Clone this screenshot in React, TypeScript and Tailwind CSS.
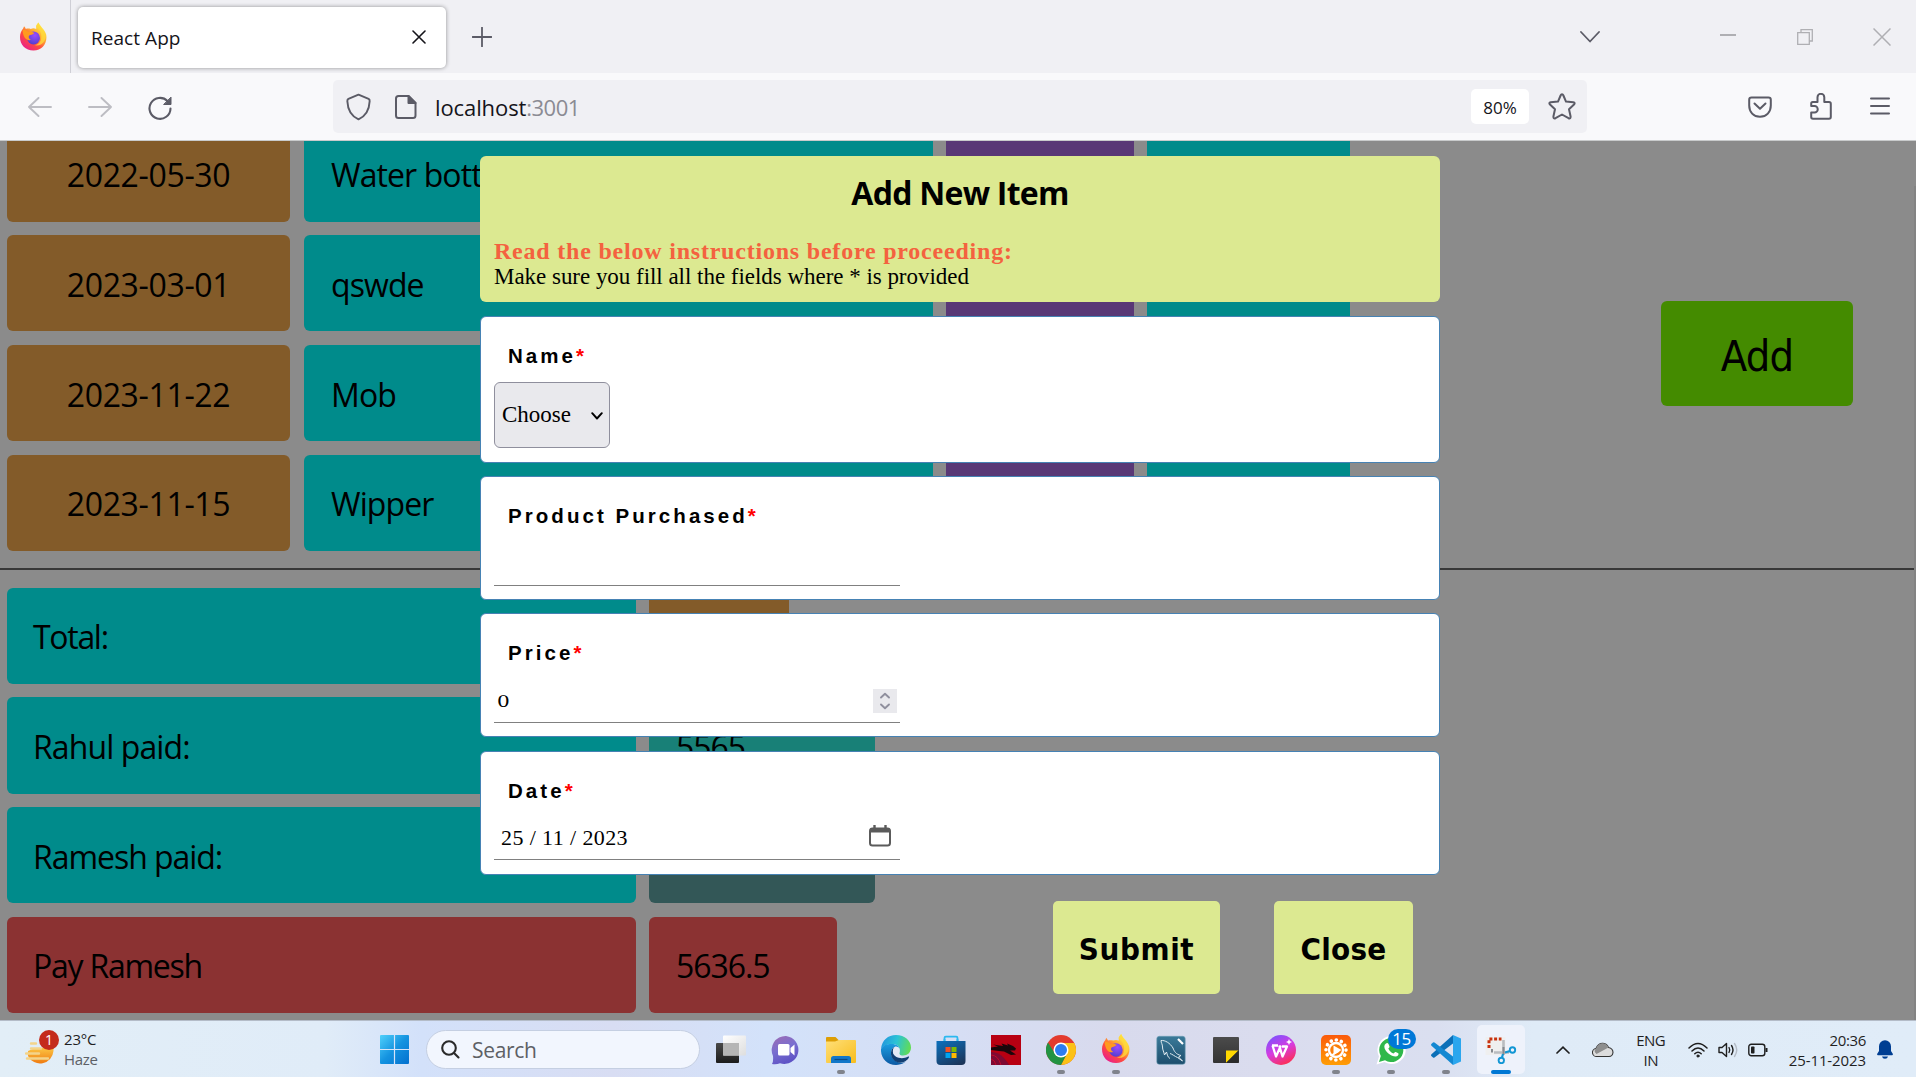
import React from "react";

const ui = "font-['Open_Sans','Noto_Sans',sans-serif]";
const serif = "font-['Liberation_Serif',serif]";

function Firefox({ className }: { className: string }) {
  return (
    <svg viewBox="0 0 30 32" className={className}>
      <defs>
        <linearGradient id="ffBody" x1="0.85" y1="0.1" x2="0.2" y2="0.95">
          <stop offset="0" stopColor="#fff44f" />
          <stop offset="0.35" stopColor="#ffa931" />
          <stop offset="0.65" stopColor="#ff4b3e" />
          <stop offset="1" stopColor="#e91e8c" />
        </linearGradient>
        <radialGradient id="ffGlobe" cx="0.6" cy="0.3" r="0.8">
          <stop offset="0" stopColor="#9a4dff" />
          <stop offset="1" stopColor="#4a3dc8" />
        </radialGradient>
      </defs>
      <path d="M18 5C18 3 20 1 20.500 0C22 4 27 7 29 13C31 22 25 31 15 31C6 31 0 25 0 16C0 12 1.500 9 3.500 6.500L4.500 4C5.500 5 6 6 6.500 7C8 6.500 10 6.500 12 7C14 6 16 6 18 7Z" fill="url(#ffBody)" />
      <circle cx="15" cy="17" r="7.200" fill="url(#ffGlobe)" />
      <path d="M3 8C6 8 8 9 9 10.500C11 10 14 10.500 16 11.500C14 13 12 14 10.500 14C9 15 9.500 18 12 19C9 21 3 18 3 8Z" fill="#ff9a1f" />
      <path d="M18 5C23 8 25 14 23 20C22 23 19 25 16 25C23 27 29 21 28.500 14C27 9 23 6 20.500 0C19 2 17 4 18 5Z" fill="#ffd93b" opacity="0.8" />
    </svg>
  );
}

function TitleBar() {
  return (
    <div className="flex h-[73px] shrink-0 items-center bg-[#f0f0f4]">
      <div className="flex h-full w-[71px] items-center border-r border-[#cfcfd6] pl-5">
        <Firefox className="h-[32px] w-[27px]" />
      </div>
      <div className="mt-[1px] ml-[7px] flex h-[61px] w-[368px] items-center justify-between rounded-[5px] bg-white pr-[20px] pl-[13px] shadow-[0_0_4px_rgba(0,0,0,0.4)]">
        <span className={`${ui} pt-[2px] text-[19px] tracking-[0.050px] text-[#15141a]`}>React App</span>
        <svg viewBox="0 0 14 14" className="h-[14px] w-[14px]" stroke="#15141a" strokeWidth="1.600" strokeLinecap="round">
          <path d="M1 1L13 13M13 1L1 13" />
        </svg>
      </div>
      <svg viewBox="0 0 20 20" className="mt-[1px] ml-[26px] h-5 w-5" stroke="#5b5b66" strokeWidth="1.800" strokeLinecap="round">
        <path d="M10 0.500V19.500M0.500 10H19.500" />
      </svg>
      <div className="ml-auto flex items-center">
        <svg viewBox="0 0 20 12" className="mr-[120px] h-3 w-5" fill="none" stroke="#5b5b66" strokeWidth="1.800" strokeLinecap="round" strokeLinejoin="round">
          <path d="M1 1L10 10.500L19 1" />
        </svg>
        <div className="mr-[61px] mb-[3px] h-[2px] w-4 bg-[#afafb3]" />
        <svg viewBox="0 0 16 16" className="mr-[60px] h-4 w-4" fill="none" stroke="#afafb3" strokeWidth="1.300">
          <path d="M0.700 3.700H12.300V15.300H0.700ZM4 3.500V0.700H15.300V12H12.500" />
        </svg>
        <svg viewBox="0 0 18 18" className="mr-[25px] h-[18px] w-[18px]" stroke="#afafb3" strokeWidth="1.500">
          <path d="M0.500 0.500L17.500 17.500M17.500 0.500L0.500 17.500" />
        </svg>
      </div>
    </div>
  );
}

function Toolbar() {
  return (
    <div className="flex h-[68px] shrink-0 items-center border-b border-[#c9cbcc] bg-[#f9f9fb]">
      <svg viewBox="0 0 24 20" className="mt-[1px] ml-7 h-5 w-6" fill="none" stroke="#bdbdc3" strokeWidth="1.900" strokeLinecap="round" strokeLinejoin="round">
        <path d="M23 10H1M10.500 1L1 10L10.500 19" />
      </svg>
      <svg viewBox="0 0 24 20" className="mt-[1px] ml-[36px] h-5 w-6" fill="none" stroke="#bdbdc3" strokeWidth="1.900" strokeLinecap="round" strokeLinejoin="round">
        <path d="M1 10H23M13.500 1L23 10L13.500 19" />
      </svg>
      <svg viewBox="0 0 24 24" className="mt-[2px] ml-[36px] h-6 w-6 shrink-0" fill="none" stroke="#5b5b66" strokeWidth="2.100" strokeLinecap="round">
        <path d="M22.500 12.500A10.500 10.500 0 1 1 19.500 5" />
        <path d="M23 1.500V8.500H16Z" fill="#5b5b66" strokeWidth="1" strokeLinejoin="round" />
      </svg>
      <div className="ml-[161px] flex h-[53px] w-[1254px] shrink-0 items-center rounded-[5px] bg-[#f0f0f4]">
        <svg viewBox="0 0 26 28" className="ml-[13px] h-7 w-[25px]" fill="none" stroke="#5b5b66" strokeWidth="2" strokeLinejoin="round">
          <path d="M13 1.200L23.500 5.500Q24.800 6.200 24.600 8C24.200 16.500 20.500 23.500 13 26.800C5.500 23.500 1.800 16.500 1.400 8Q1.300 6.200 2.500 5.500Z" />
        </svg>
        <svg viewBox="0 0 22 24" className="ml-[24px] h-6 w-[22px]" fill="none" stroke="#5b5b66" strokeWidth="2" strokeLinejoin="round">
          <path d="M3.500 1H13.500L20.500 8V20.500Q20.500 23 18 23H3.500Q1 23 1 20.500V3.500Q1 1 3.500 1Z" />
          <path d="M13.500 1V8H20.500Z" fill="#5b5b66" />
        </svg>
        <div className={`${ui} mt-[2px] ml-[18px] flex text-[22px] text-[#15141a]`}>
          <span className="tracking-[-0.100px]">localhost</span>
          <span className="tracking-[-0.500px] text-[#8b8b93]">:3001</span>
        </div>
        <div className={`${ui} ml-auto flex h-[35px] w-[58px] items-center justify-center rounded-[5px] bg-white pt-[2px] text-[17px] text-[#15141a]`}>80%</div>
        <svg viewBox="0 0 28 27" className="mr-[11px] ml-[19px] h-[27px] w-7" fill="none" stroke="#5b5b66" strokeWidth="2" strokeLinejoin="round">
          <path d="M14 1.300Q14.900 1.300 15.400 2.500L18 8.600L25.300 9.300Q27.600 9.700 26 11.500L21 16.200L22.600 23.500Q22.700 26 20.500 25.200L14 21.500L7.500 25.200Q5.300 26 5.400 23.500L7 16.200L2 11.500Q0.400 9.700 2.700 9.300L10 8.600L12.600 2.500Q13.100 1.300 14 1.300Z" />
        </svg>
      </div>
      <div className="mr-[26px] ml-auto flex items-center">
        <svg viewBox="0 0 24 22" className="mr-[1px] h-[22px] w-6" fill="none" stroke="#5b5b66" strokeWidth="2" strokeLinecap="round" strokeLinejoin="round">
          <path d="M3.500 1.500H20.500Q22.800 1.500 22.800 3.800V9.500C22.800 16 18.500 20.800 12 20.800C5.500 20.800 1.200 16 1.200 9.500V3.800Q1.200 1.500 3.500 1.500Z" />
          <path d="M6.500 7.500L12 12.800L17.500 7.500" />
        </svg>
        <svg viewBox="0 0 22 27" className="ml-[37px] h-[27px] w-[22px]" fill="none" stroke="#5b5b66" strokeWidth="2" strokeLinejoin="round">
          <path d="M1.200 13V10.500Q1.200 9 2.700 9H7.500V4.200A3.400 3.400 0 0 1 14.300 4.200V9H19Q20.800 9 20.800 10.800V24Q20.800 25.800 19 25.800H3Q1.200 25.800 1.200 24V19.500H4.500A3.200 3.200 0 0 0 4.500 13Z" />
        </svg>
        <svg viewBox="0 0 20 18" className="-mt-[2px] ml-[38px] h-[18px] w-5" stroke="#5b5b66" strokeWidth="2" strokeLinecap="round">
          <path d="M1 1.500H19M1 9H19M1 16.500H19" />
        </svg>
      </div>
    </div>
  );
}

const items = [
  { date: "2022-05-30", name: "Water bottle" },
  { date: "2023-03-01", name: "qswde" },
  { date: "2023-11-22", name: "Mob" },
  { date: "2023-11-15", name: "Wipper" },
];

const cell = "flex h-[96.200px] items-center rounded-[6px] pt-[3px] whitespace-nowrap";

function Ledger() {
  return (
    <div className={`${ui} flex h-full text-[32px] text-black`}>
      <div className="w-[1350px] shrink-0">
        <div className="-mt-[15.500px] flex flex-col gap-[13.600px] pl-[7px]">
          {items.map((it) => (
            <div key={it.date} className="flex">
              <div className={`${cell} w-[283px] justify-center bg-[#835b29] tracking-[-0.350px]`}>{it.date}</div>
              <div className={`${cell} ml-[14px] w-[629px] bg-[#008b8b] pl-[27px] tracking-[-0.900px]`}>{it.name}</div>
              <div className={`${cell} ml-[13px] w-[188px] bg-[#593876]`} />
              <div className={`${cell} ml-[13px] w-[203px] bg-[#008b8b]`} />
            </div>
          ))}
        </div>
        <div className="mt-[16.900px] h-[2px] w-[1914px] bg-[#383838]" />
        <div className="mt-[17.800px] flex flex-col gap-[13.500px] pl-[7px] tracking-[-1.050px]">
          <div className="flex gap-[13px]">
            <div className={`${cell} w-[629px] bg-[#008b8b] pl-[26px] tracking-[-1.300px]`}>Total:</div>
            <div className={`${cell} w-[140px] bg-[#835b29]`} />
          </div>
          <div className="flex gap-[13px]">
            <div className={`${cell} w-[629px] bg-[#008b8b] pl-[26px] tracking-[-0.900px]`}>Rahul paid:</div>
            <div className={`${cell} w-[226px] bg-[#188077] pl-[27px]`}>5565</div>
          </div>
          <div className="flex gap-[13px]">
            <div className={`${cell} w-[629px] bg-[#008b8b] pl-[26px]`}>Ramesh paid:</div>
            <div className={`${cell} w-[226px] bg-[#335757]`} />
          </div>
          <div className="flex gap-[13px]">
            <div className={`${cell} w-[629px] bg-[#8b3232] pl-[26px] tracking-[-1.250px]`}>Pay Ramesh</div>
            <div className={`${cell} w-[188px] bg-[#8b3232] pl-[27px]`}>5636.5</div>
          </div>
        </div>
      </div>
      <div className="mt-[160px] ml-[311px] flex h-[105px] w-[192px] items-center justify-center rounded-[6px] bg-[#448b00] pt-[5px] font-['DejaVu_Sans_Condensed','DejaVu_Sans',sans-serif] text-[43px] tracking-[-0.800px]">
        Add
      </div>
      <div className="mt-[45px] ml-auto w-[2px] bg-[#838383]" />
    </div>
  );
}

function Label({ text }: { text: string }) {
  return (
    <div className="pl-[14px] font-['Liberation_Sans',sans-serif] text-[20.500px] leading-[24px] font-bold tracking-[3.050px] text-black">
      {text}
      <span className="text-[#ff0000]">*</span>
    </div>
  );
}

const card = "w-full rounded-[6px] border border-[#4682b4] bg-white px-[13px]";
const field = `${serif} flex h-[47px] w-[406px] items-center justify-between border-b border-[#808080] text-black`;

function Modal() {
  return (
    <div className="absolute inset-0 pl-[480px]">
      <div className="mt-[15px] flex w-[960px] flex-col">
        <div className="h-[146px] rounded-[6px] bg-[#dce991] px-[14px]">
          <div className={`${ui} pt-[14px] text-center text-[32px] leading-[46px] font-bold tracking-[-0.750px] text-black`}>Add New Item</div>
          <div className={`${serif} mt-[23px] text-[24px] leading-[25px] font-bold tracking-[0.790px] text-[#f4623f]`}>Read the below instructions before proceeding:</div>
          <div className={`${serif} text-[23px] leading-[25px] tracking-[-0.030px] text-black`}>Make sure you fill all the fields where * is provided</div>
        </div>
        <div className={`${card} mt-[14px] h-[147px] pt-[27px]`}>
          <Label text="Name" />
          <div className={`${serif} mt-[14px] flex h-[66px] w-[116px] items-center justify-between rounded-[6px] border border-[#8f8f9d] bg-[#e9e9ed] pt-[1px] pr-[6px] pl-[7px] text-[23px] text-black`}>
            Choose
            <svg viewBox="0 0 12 8" className="h-2 w-3" fill="none" stroke="#000" strokeWidth="1.900" strokeLinecap="round" strokeLinejoin="round">
              <path d="M1.200 1.200L6 6.500L10.800 1.200" />
            </svg>
          </div>
        </div>
        <div className={`${card} mt-[13px] h-[124px] pt-[27px]`}>
          <Label text="Product Purchased" />
          <div className={`${field} mt-[11px]`} />
        </div>
        <div className={`${card} mt-[13px] h-[124px] pt-[27px]`}>
          <Label text="Price" />
          <div className={`${field} mt-[11px] pt-[3px] pr-[3px] pl-[3px]`}>
            <span className="origin-left scale-x-125 pt-[2px] font-['DejaVu_Serif',serif] text-[16px] leading-6">0</span>
            <svg viewBox="0 0 24 24" className="h-6 w-6 bg-[#e9e9ed]" fill="none" stroke="#8f8f9d" strokeWidth="1.900" strokeLinecap="round" strokeLinejoin="round">
              <path d="M8 8.500L12 4.800L16 8.500M8 15.500L12 19.200L16 15.500" />
            </svg>
          </div>
        </div>
        <div className={`${card} mt-[14px] h-[124px] pt-[27px]`}>
          <Label text="Date" />
          <div className={`${field} mt-[10px] pr-[9px] pl-[7px]`}>
            <span className="pt-[3px] text-[22px] tracking-[0.400px]">25 / 11 / 2023</span>
            <svg viewBox="0 0 22 22" className="mb-[1px] h-[22px] w-[22px]" fill="none" stroke="#5b5b5b" strokeWidth="2">
              <rect x="1" y="3.500" width="20" height="17" rx="2.500" />
              <path d="M1 5.500H21" strokeWidth="4" />
              <path d="M5.500 0.500V4M16.500 0.500V4" strokeWidth="2.400" strokeLinecap="round" />
            </svg>
          </div>
        </div>
        <div className="mt-[26px] mr-[27px] flex justify-end gap-[54px] font-['DejaVu_Sans_Condensed','DejaVu_Sans',sans-serif] text-[31px] font-bold text-black">
          <div className="flex h-[93px] w-[167px] items-center justify-center rounded-[5px] bg-[#dce991] pt-[3px] tracking-[0.600px]">Submit</div>
          <div className="flex h-[93px] w-[139px] items-center justify-center rounded-[5px] bg-[#dce991] pt-[3px] tracking-[0.300px]">Close</div>
        </div>
      </div>
    </div>
  );
}

function TaskView() {
  return (
    <svg viewBox="0 0 30 30" className="h-[30px] w-[30px]">
      <defs>
        <linearGradient id="tvDark" x1="0" y1="0" x2="0" y2="1"><stop offset="0" stopColor="#494949" /><stop offset="1" stopColor="#1c1c1c" /></linearGradient>
        <linearGradient id="tvLight" x1="0" y1="0" x2="1" y2="1"><stop offset="0" stopColor="#ffffff" /><stop offset="1" stopColor="#dedede" /></linearGradient>
      </defs>
      <rect x="0" y="8" width="23" height="20" rx="1" fill="url(#tvDark)" />
      <rect x="7" y="0.500" width="23" height="20" rx="1" fill="url(#tvLight)" />
      <rect x="7" y="8" width="16" height="12.500" fill="#b5b5b5" />
    </svg>
  );
}
function Chat() {
  return (
    <svg viewBox="0 0 30 30" className="h-[30px] w-[30px]">
      <defs><linearGradient id="chatBg" x1="0.2" y1="0" x2="0.6" y2="1"><stop offset="0" stopColor="#9a6bb5" /><stop offset="0.45" stopColor="#7a6fd0" /><stop offset="1" stopColor="#5b50c4" /></linearGradient></defs>
      <path d="M15 1A14 14 0 1 1 9 28.200Q5 30 1 29Q2.500 27 2 21A14 14 0 0 1 15 1Z" fill="url(#chatBg)" />
      <rect x="7" y="9" width="11.500" height="11.500" rx="1.500" fill="#fff" />
      <path d="M19.500 13L23.500 9.500V20.500L19.500 17Z" fill="#fff" />
    </svg>
  );
}
function Folder() {
  return (
    <svg viewBox="0 0 30 30" className="h-[30px] w-[30px]">
      <defs><linearGradient id="fold" x1="0" y1="0" x2="1" y2="1"><stop offset="0" stopColor="#ffdf79" /><stop offset="1" stopColor="#f8bd1c" /></linearGradient></defs>
      <path d="M0 3Q0 2 1 2H9.500L13 5.500V12H0Z" fill="#dd9e05" />
      <path d="M0 6.500H9L13 5H29Q30 5 30 6V27Q30 28 29 28H1Q0 28 0 27Z" fill="url(#fold)" />
      <path d="M5 28V23.500Q5 21 7.500 21H22.500Q25 21 25 23.500V28Z" fill="#1277c9" />
      <path d="M8.500 24.500H21.500" stroke="#0a4a86" strokeWidth="1.200" />
    </svg>
  );
}
function Edge() {
  return (
    <svg viewBox="0 0 30 30" className="h-[30px] w-[30px]">
      <defs>
        <linearGradient id="edgeTop" x1="0" y1="0.3" x2="1" y2="0.5"><stop offset="0" stopColor="#2295dd" /><stop offset="0.5" stopColor="#2bc3d6" /><stop offset="1" stopColor="#62dc55" /></linearGradient>
        <linearGradient id="edgeLeft" x1="0" y1="0" x2="0" y2="1"><stop offset="0" stopColor="#1b9de0" /><stop offset="1" stopColor="#0c59a4" /></linearGradient>
      </defs>
      <path d="M0 14C1 5 7 0 15 0C24 0 30 6 30 12.500C30 17.500 26.500 20.500 22 20.500C19 20.500 17.500 19 18.500 17C19.800 13 17 9 11.500 9C5 9 1 12 0 14Z" fill="url(#edgeTop)" />
      <path d="M0 14C2 10 6 8.800 11 8.900C15 9 18 11 18.500 13C15 10.500 10.500 12 10 17.500C9.700 22 13 26 18 27.500Q21.500 28.400 24.500 26.800C21 29.500 17.500 30 15 30C6 30 -0.500 23 0 14Z" fill="url(#edgeLeft)" />
      <path d="M10 17.500C9.500 23 14 27.600 19 27.700C23 27.700 26.500 25.500 28 22.300C28.300 21.500 27.800 21.200 27.200 21.500C22 24.500 14 23.500 12.200 18C11.600 15.500 12.500 13 14 12C11.500 12.500 10.200 15 10 17.500Z" fill="#123f73" />
      <path d="M14.500 11.500C11.500 13 11 17.500 13.500 20.300C16 22.500 20 23 23 22.500C20 21.500 17.500 20 18.600 17C19.300 14.500 17.500 11.500 14.500 11.500Z" fill="#e3e9f6" />
    </svg>
  );
}
function Store() {
  return (
    <svg viewBox="0 0 30 30" className="h-[30px] w-[30px]">
      <defs><linearGradient id="storeBg" x1="0.2" y1="0" x2="0.8" y2="1"><stop offset="0" stopColor="#0d6cb6" /><stop offset="1" stopColor="#1c3559" /></linearGradient></defs>
      <path d="M8.500 8V3Q8.500 1.700 9.800 1.700H20.200Q21.500 1.700 21.500 3V8" fill="none" stroke="#2cb9f0" strokeWidth="1.800" />
      <path d="M0.500 6H29.500V26Q29.500 30 25.500 30H4.500Q0.500 30 0.500 26Z" fill="url(#storeBg)" />
      <path d="M8.500 6V4M21.500 6V4" stroke="#2cb9f0" strokeWidth="1.800" />
      <rect x="9.500" y="12" width="5" height="5" fill="#f25022" /><rect x="15.500" y="12" width="5" height="5" fill="#7fba00" />
      <rect x="9.500" y="18" width="5" height="5" fill="#00a4ef" /><rect x="15.500" y="18" width="5" height="5" fill="#ffb900" />
    </svg>
  );
}
function Dragon() {
  return (
    <svg viewBox="0 0 30 30" className="h-[30px] w-[30px]">
      <rect width="30" height="30" fill="#b80012" />
      <path d="M0 12.500L7 11.500L2 9.500L12 11L10.500 8.500L17 10.500L16 8.500L22 11L25 13.500L24 15.500L19 15.500L25 19.500L20 20L13 16.500L8 16L0 15Z" fill="#1a070b" />
      <path d="M0 17Q8 17 13 23T18 30H0Z" fill="#7e0a33" />
      <path d="M0 20Q7 20 10 30M0 24Q4 25 5 30" fill="none" stroke="#c00a2a" strokeWidth="1" />
    </svg>
  );
}
function Chrome() {
  return (
    <svg viewBox="0 0 30 30" className="h-[30px] w-[30px]">
      <circle cx="15" cy="15" r="15" fill="#e33b2e" />
      <path d="M15 8H28.300A15 15 0 0 1 15 30L21 18.500Z" fill="#fbc116" />
      <path d="M9 18.500L2 7.500A15 15 0 0 0 15 30L21 18.500Z" fill="#229342" />
      <circle cx="15" cy="15" r="7.500" fill="#fff" /><circle cx="15" cy="15" r="6" fill="#2d7df0" />
    </svg>
  );
}
function MySql() {
  return (
    <svg viewBox="0 0 30 30" className="h-[30px] w-[30px]">
      <defs><linearGradient id="sqlBg" x1="0" y1="0" x2="0" y2="1"><stop offset="0" stopColor="#3b7a99" /><stop offset="1" stopColor="#1d4e6d" /></linearGradient></defs>
      <rect x="0.800" y="1.300" width="28.400" height="28" rx="2.500" fill="url(#sqlBg)" stroke="#6c9db5" strokeWidth="0.600" />
      <path d="M5 5.500C9 5 14 8 17 13C18 16 20 19.500 25 20.500L22.500 22L26.500 26L21.500 22.500C19 21.500 16 19 14 18.500M5 5.500C5 8 6.500 9 6.500 12C6.500 15 8 17 8.500 20L10.500 17C11.500 20 11.500 22 14 23.500" fill="none" stroke="#dfeaf0" strokeWidth="1" />
      <path d="M22 4L25 7M27 9L24.500 6.500" stroke="#fff" strokeWidth="2.200" />
    </svg>
  );
}
function Sticky() {
  return (
    <svg viewBox="0 0 28 28" className="h-[28px] w-[28px]">
      <defs><linearGradient id="stBg" x1="0" y1="0" x2="0" y2="1"><stop offset="0" stopColor="#4b4b4b" /><stop offset="1" stopColor="#333" /></linearGradient></defs>
      <rect x="1" y="1" width="26" height="26" rx="1" fill="url(#stBg)" />
      <path d="M14 14.500H26.500L14 27Z" fill="#ffd800" />
      <path d="M26.500 14.500L14 27H26.500Z" fill="#2b2b2b" />
    </svg>
  );
}
function Wps() {
  return (
    <svg viewBox="0 0 30 30" className="h-[30px] w-[30px]">
      <defs><linearGradient id="wpsBg" x1="0.2" y1="0" x2="0.7" y2="1"><stop offset="0" stopColor="#7a53ff" /><stop offset="0.5" stopColor="#d63be0" /><stop offset="1" stopColor="#ff2e4c" /></linearGradient></defs>
      <circle cx="15" cy="15" r="15" fill="url(#wpsBg)" />
      <path d="M6.500 10.500L10 21.500L14.500 11.500H13.500L16.500 21.500L21 11.500H16M6 10.500H12" fill="none" stroke="#fff" strokeWidth="2.300" strokeLinejoin="round" />
      <path d="M23 4L23.900 6.100L26 7L23.900 7.900L23 10L22.100 7.900L20 7L22.100 6.100Z" fill="#fff" />
    </svg>
  );
}
function Sunflower() {
  return (
    <svg viewBox="0 0 30 30" className="h-[30px] w-[30px]">
      <defs><linearGradient id="sunBg" x1="0" y1="0" x2="0" y2="1"><stop offset="0" stopColor="#fb5a0a" /><stop offset="1" stopColor="#ff9d05" /></linearGradient></defs>
      <rect width="30" height="30" rx="5" fill="url(#sunBg)" />
      <circle cx="15" cy="15" r="10" fill="none" stroke="#fff" strokeWidth="3.600" strokeLinecap="round" strokeDasharray="0.100 5.136" />
      <circle cx="15" cy="15" r="8.200" fill="#fff" />
      <circle cx="15" cy="15" r="5.800" fill="#fb7d08" />
      <path d="M12.500 10.500L20.500 15L12.500 20Z" fill="#fff" />
      <path d="M11 20L18 16" stroke="#fff" strokeWidth="1.500" />
    </svg>
  );
}
function WhatsApp() {
  return (
    <div className="relative h-[30px] w-[30px]">
      <svg viewBox="0 0 30 30" className="h-[30px] w-[30px]">
        <path d="M15 1A14 14 0 1 1 8.500 27L0.500 29.500L3 21.500A14 14 0 0 1 15 1Z" fill="#fff" />
        <path d="M15 3A12 12 0 1 1 9 25.200L3 27L4.800 21A12 12 0 0 1 15 3Z" fill="#2fb84b" />
        <path d="M10 8.500Q11.500 7.500 12.500 9L13.500 11.500Q13.700 12.500 12.300 13.500C13.500 16 15 17.500 17.500 18.500Q19 16.500 19.800 17L22.300 18.300Q23 19 22 20.500C19.500 24 8.500 18 8.300 11.500Q8.300 9.500 10 8.500Z" fill="#fff" />
      </svg>
      <div className={`${ui} absolute -top-[6px] left-[12px] flex h-5 w-[28px] items-center justify-center rounded-full bg-[#0078d7] text-[17px] tracking-[-0.400px] text-white`}>15</div>
    </div>
  );
}
function VsCode() {
  return (
    <svg viewBox="0 0 30 30" className="h-[30px] w-[30px]">
      <path d="M22 0L30 3.500V26.500L22 30Z" fill="#2ba6ee" />
      <path d="M22 0V8.500L3.500 22.500Q2.800 23 2 22.500L0.300 21Q-0.300 20 0.500 19.200Z" fill="#0b6fb8" />
      <path d="M22 30V21.500L3.500 7.500Q2.800 7 2 7.500L0.300 9Q-0.300 10 0.500 10.800Z" fill="#1388d2" />
    </svg>
  );
}
function Snip() {
  return (
    <svg viewBox="0 0 32 30" className="h-[30px] w-8">
      <rect x="0.500" y="3" width="20" height="18" fill="#efefef" />
      <path d="M4 14V5H16.500" fill="none" stroke="#c8320f" strokeWidth="3" strokeDasharray="3 1.700" />
      <path d="M18.500 6V17M9 18.500H24" stroke="#b9bcc0" strokeWidth="2.600" />
      <path d="M7 15V18.500M18.500 13V21" stroke="#868a90" strokeWidth="2" />
      <path d="M20 18.500L25 17M18 20L17 23.500" stroke="#1296d4" strokeWidth="2.200" />
      <circle cx="27.500" cy="16" r="2.700" fill="none" stroke="#1296d4" strokeWidth="1.900" />
      <circle cx="16.300" cy="26.500" r="2.700" fill="none" stroke="#1296d4" strokeWidth="1.900" />
    </svg>
  );
}

const apps = [
  { icon: <TaskView /> },
  { icon: <Chat /> },
  { icon: <Folder />, open: true },
  { icon: <Edge /> },
  { icon: <Store /> },
  { icon: <Dragon /> },
  { icon: <Chrome />, open: true },
  { icon: <Firefox className="-mt-[1px] h-[30px] w-[28px]" />, open: true },
  { icon: <MySql /> },
  { icon: <Sticky /> },
  { icon: <Wps /> },
  { icon: <Sunflower />, open: true },
  { icon: <WhatsApp />, open: true },
  { icon: <VsCode />, open: true },
];

function Taskbar() {
  return (
    <div className={`${ui} flex h-[57px] shrink-0 items-center border-t border-[#b4bcc8] bg-[linear-gradient(90deg,#e2eef7_0%,#e0ecf8_17%,#d3e1fa_22%,#d8ddf3_32%,#d3e2fa_40%,#d6def4_50%,#d8daed_58%,#dadcee_66%,#dadff0_75%,#dfebf7_80%,#e0ecf8_100%)] text-[15px] text-[#1f1f1f]`}>
      <div className="flex w-[380px] items-center pl-[25px]">
        <div className="relative mt-[8px] h-[28px] w-[30px]">
          <svg viewBox="0 0 30 28" className="h-[28px] w-[30px]">
            <defs><linearGradient id="sun" x1="0" y1="0" x2="0" y2="1"><stop offset="0" stopColor="#fbc443" /><stop offset="1" stopColor="#f07c12" /></linearGradient></defs>
            <path d="M10 9H28.500V12A13.500 13.500 0 0 1 3 17V12Z" fill="url(#sun)" />
            <path d="M6 4.500H11M6 9.500H16M1 14.500H14M2 19.500H23" stroke="#f3d48a" strokeWidth="2.400" strokeLinecap="round" />
          </svg>
          <div className="absolute -top-[9px] left-[14px] flex h-5 w-5 items-center justify-center rounded-full bg-[#c42b1c] text-[14px] leading-5 text-white">1</div>
        </div>
        <div className="ml-[9px] leading-5">
          <div className="tracking-[-0.200px]">23°C</div>
          <div className="tracking-[-0.300px] text-[#5c6066]">Haze</div>
        </div>
      </div>
      <svg viewBox="0 0 29 29" className="mt-[1px] h-[29px] w-[29px]">
        <defs><linearGradient id="win" x1="0" y1="0" x2="1" y2="1"><stop offset="0" stopColor="#4fd0fb" /><stop offset="0.5" stopColor="#1493e0" /><stop offset="1" stopColor="#0370cf" /></linearGradient></defs>
        <path d="M1 0H13.900V13.900H0V1Q0 0 1 0ZM15.100 0H28Q29 0 29 1V13.900H15.100ZM0 15.100H13.900V29H1Q0 29 0 28ZM15.100 15.100H29V28Q29 29 28 29H15.100Z" fill="url(#win)" />
      </svg>
      <div className="mt-[1px] ml-[17px] flex h-[39px] w-[274px] items-center rounded-full border border-[#c5cfe2] bg-[#f2f6fe] pl-[14px]">
        <svg viewBox="0 0 19 19" className="h-[19px] w-[19px]" fill="none" stroke="#2a2a2a" strokeWidth="2.100" strokeLinecap="round">
          <circle cx="8" cy="8" r="6.800" /><path d="M13 13L17.500 17.500" />
        </svg>
        <span className="ml-[12px] pt-[2px] text-[21px] tracking-[-0.300px] text-[#5d6065]">Search</span>
      </div>
      <div className="ml-[3px] flex h-full">
        {apps.map((a, i) => (
          <div key={i} className="relative flex h-full w-[55px] items-center justify-center pt-[1px]">
            {a.icon}
            {a.open && <div className="absolute bottom-[3px] h-1 w-2 rounded-full bg-[#80838c]" />}
          </div>
        ))}
        <div className="flex h-full w-[55px] items-center justify-center">
          <div className="relative flex h-[49px] w-[48px] items-center justify-center rounded-[5px] bg-[#eef2fb]">
            <Snip />
            <div className="absolute bottom-0 h-1 w-5 rounded-full bg-[#0078d4]" />
          </div>
        </div>
      </div>
      <div className="mt-[1px] ml-auto flex items-center pr-[23px]">
        <svg viewBox="0 0 14 8" className="h-2 w-[14px]" fill="none" stroke="#1f1f1f" strokeWidth="1.700" strokeLinecap="round"><path d="M1 7L7 1.200L13 7" /></svg>
        <svg viewBox="0 0 22 16" className="ml-[22px] h-4 w-[22px]" stroke="#333" strokeWidth="1.100">
          <path d="M5 14.500A4 4 0 0 1 4 6.500Q6 1 11 1.200Q15 1.500 16.500 5.500Q21 6.500 21 10.500Q20.500 14.500 17 14.500Z" fill="#dcdcdc" />
          <path d="M4 6.500Q6 1 11 1.200Q15 1.500 16.500 5.500L4.500 12Q1 9 4 6.500Z" fill="#8e8e8e" stroke="none" />
        </svg>
        <div className="ml-[21px] w-[32px] text-center leading-5 tracking-[-0.500px]"><div>ENG</div><div>IN</div></div>
        <svg viewBox="0 0 20 16" className="ml-[21px] h-4 w-5" fill="none" stroke="#1f1f1f" strokeWidth="1.500" strokeLinecap="round">
          <path d="M1 6Q10 -3 19 6M4 9Q10 2.800 16 9M6.800 11.800Q10 8.500 13.200 11.800" /><circle cx="10" cy="14" r="1.100" fill="#1f1f1f" strokeWidth="1" />
        </svg>
        <svg viewBox="0 0 20 16" className="ml-[10px] h-4 w-5" fill="none" stroke="#1f1f1f" strokeWidth="1.400" strokeLinecap="round" strokeLinejoin="round">
          <path d="M1 5.500H4L8.500 1.500V14.500L4 10.500H1ZM11 5.500Q12.500 8 11 10.500M13.500 3.500Q16.500 8 13.500 12.500" /><path d="M16.500 1.500Q21 8 16.500 14.500" stroke="#b5bcc6" />
        </svg>
        <svg viewBox="0 0 20 14" className="ml-[10px] h-[14px] w-5" fill="none" stroke="#1f1f1f" strokeWidth="1.400">
          <rect x="0.800" y="1.200" width="16" height="11.600" rx="2.500" /><rect x="3" y="3.500" width="3.500" height="7" rx="0.800" fill="#1f1f1f" stroke="none" /><path d="M18.500 5V9" strokeWidth="2" />
        </svg>
        <div className="ml-[21px] text-right leading-5"><div className="tracking-[-0.350px]">20:36</div><div className="tracking-[-0.100px]">25-11-2023</div></div>
        <svg viewBox="0 0 16 19" className="ml-[11px] h-[19px] w-4" fill="#003e92">
          <path d="M8 0.300A6 6 0 0 1 14 6.300V11L15.900 14Q16 15.200 15 15.200H1Q0 15.200 0.100 14L2 11V6.300A6 6 0 0 1 8 0.300ZM5 16.500H11Q10.500 18.800 8 18.800Q5.500 18.800 5 16.500Z" />
        </svg>
      </div>
    </div>
  );
}

export default function App() {
  return (
    <div className="flex h-[1077px] w-[1916px] flex-col overflow-hidden">
      <TitleBar />
      <Toolbar />
      <div className="relative h-[879px] shrink-0 overflow-hidden bg-[#8b8b8b]">
        <Ledger />
        <Modal />
      </div>
      <Taskbar />
    </div>
  );
}
